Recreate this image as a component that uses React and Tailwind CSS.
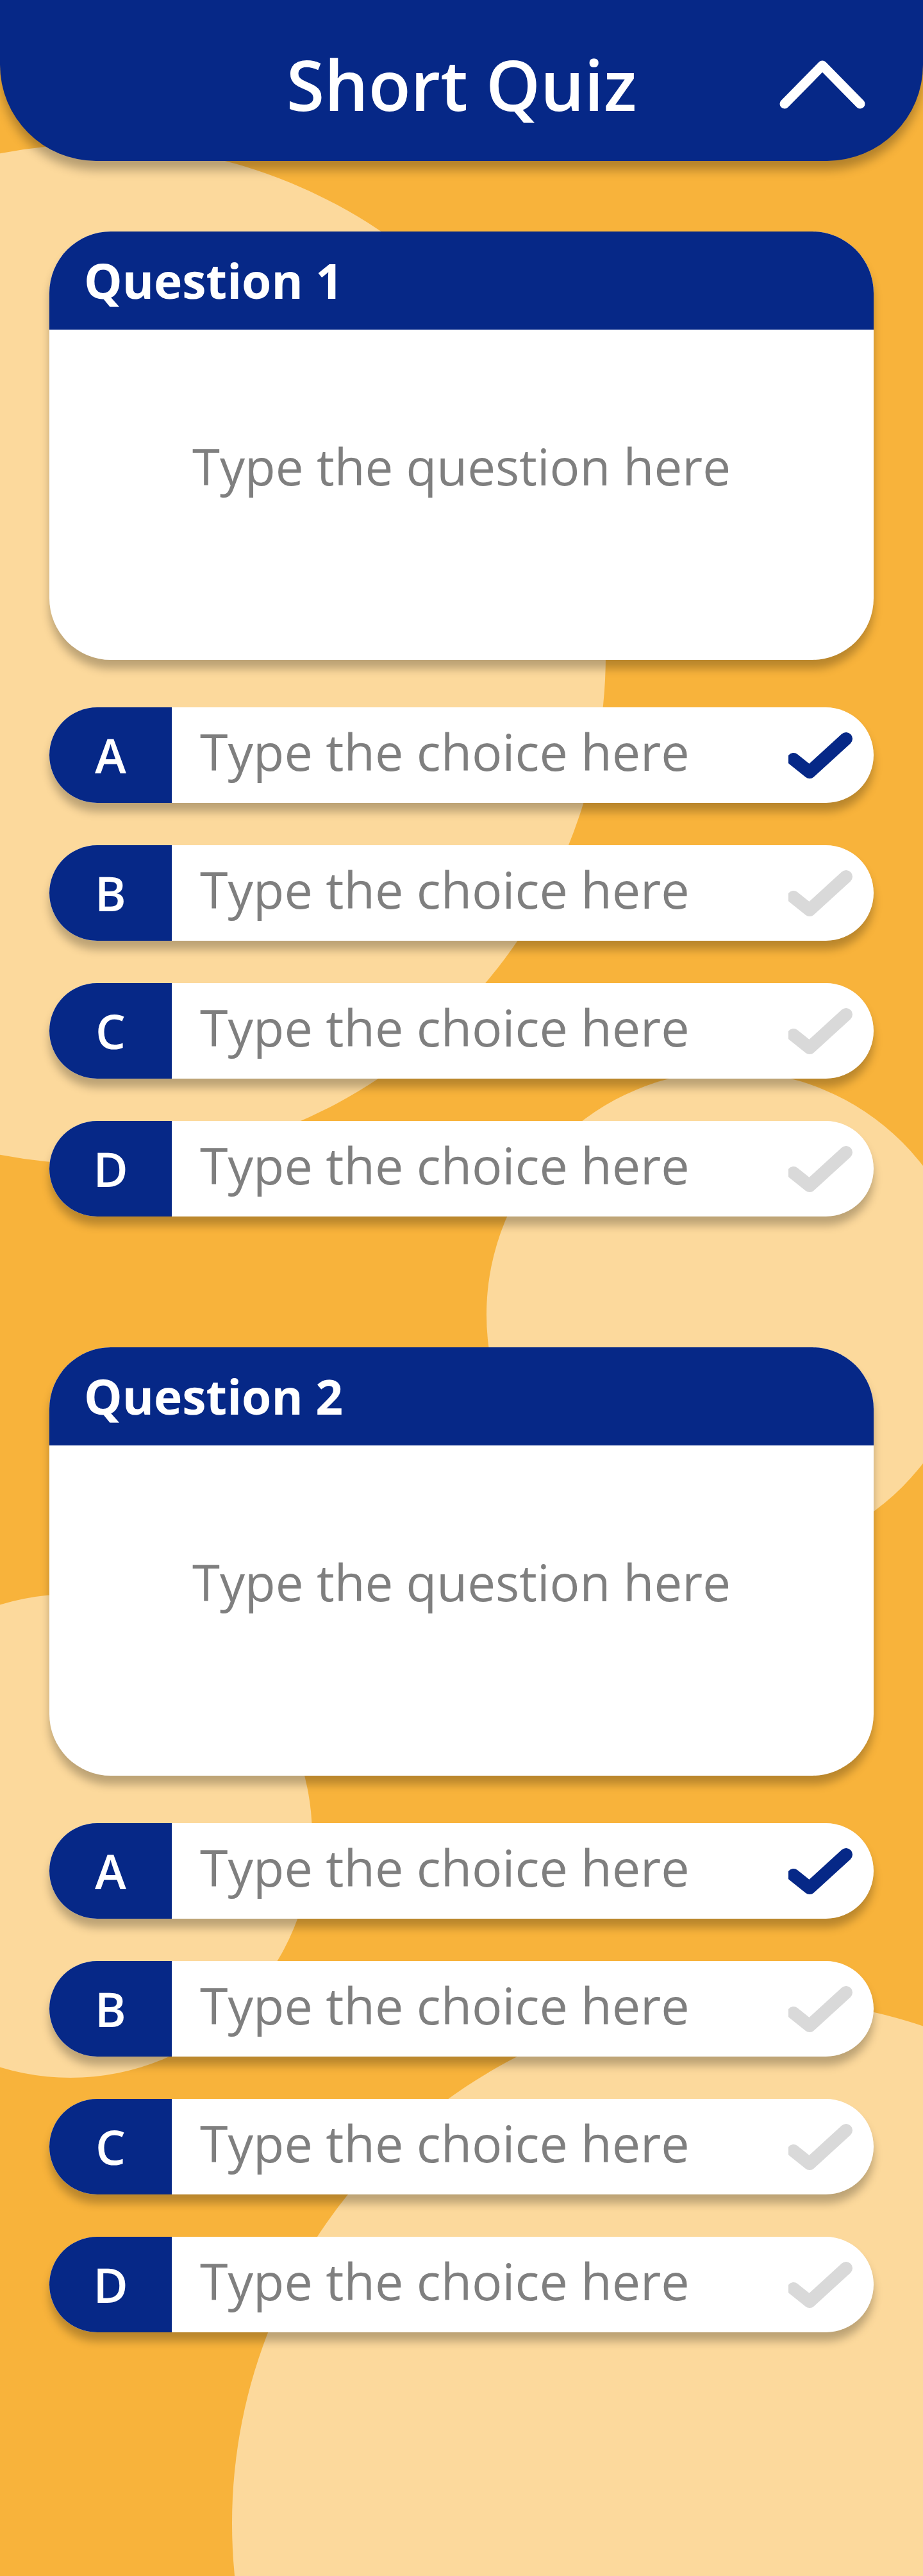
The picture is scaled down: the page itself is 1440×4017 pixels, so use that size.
import React from 'react'

const questions = [
  { title: 'Question 1', choices: ['A', 'B', 'C', 'D'], answer: 'A' },
  { title: 'Question 2', choices: ['A', 'B', 'C', 'D'], answer: 'A' },
]

const Check = ({ active }) => (
  <svg width="100" height="76" viewBox="0 0 100 76" className="mr-[33px] shrink-0">
    <polyline
      points="8,44 33,64 90,12"
      fill="none"
      stroke={active ? '#062887' : '#d9d9d9'}
      strokeWidth="20"
      strokeLinecap="round"
      strokeLinejoin="round"
    />
  </svg>
)

const Choice = ({ letter, active }) => (
  <div className="h-[149px] flex items-center bg-white rounded-full overflow-hidden shadow-[0_14px_14px_rgba(0,0,0,0.25)]">
    <div className="w-[191px] h-full bg-[#062887] flex items-center justify-center text-white text-[74px] font-semibold leading-none">
      {letter}
    </div>
    <div className="flex-1 pl-[44px] pb-[12px] text-[#7f7f7f] text-[79px] leading-none">
      Type the choice here
    </div>
    <Check active={active} />
  </div>
)

const Question = ({ q }) => (
  <section>
    <div className="h-[668px] rounded-[96px] overflow-hidden bg-white shadow-[0_14px_14px_rgba(0,0,0,0.25)] flex flex-col">
      <div className="h-[153px] bg-[#062887] flex items-center pl-[54px] text-white text-[75px] font-bold leading-none">
        {q.title}
      </div>
      <div className="flex-1 flex justify-center pt-[174px] text-[#7f7f7f] text-[78px] leading-none">
        Type the question here
      </div>
    </div>
    <div className="mt-[74px] flex flex-col gap-[66px]">
      {q.choices.map((c) => (
        <Choice key={c} letter={c} active={c === q.answer} />
      ))}
    </div>
  </section>
)

const App = () => {
  return (
    <div className="relative min-h-[4017px] bg-[#f8b33b] overflow-hidden font-['Open_Sans',sans-serif]">
      {/* background blobs */}
      <svg className="absolute inset-0" width="1440" height="4017" viewBox="0 0 1440 4017">
        <circle cx="150" cy="1020" r="795" fill="#fcd99c" />
        <circle cx="1139" cy="2050" r="380" fill="#fcd99c" />
        <circle cx="110" cy="2863" r="377" fill="#fcd99c" />
        <circle cx="1180" cy="3935" r="818" fill="#fcd99c" />
      </svg>

      <header className="relative h-[251px] bg-[#062887] rounded-b-[150px] shadow-[0_14px_16px_rgba(0,0,0,0.28)] grid grid-cols-[1fr_auto_1fr] items-center pt-[12px]">
        <div />
        <h1 className="text-white text-[108px] font-semibold leading-none">Short Quiz</h1>
        <div className="flex justify-end pr-[90px]">
          <svg width="134" height="76" viewBox="0 0 134 76">
            <polyline
              points="8,68 67,8 126,68"
              fill="none"
              stroke="white"
              strokeWidth="15"
              strokeLinecap="round"
              strokeLinejoin="round"
            />
          </svg>
        </div>
      </header>

      <main className="relative px-[77px] pt-[110px] flex flex-col gap-[204px]">
        {questions.map((q) => (
          <Question key={q.title} q={q} />
        ))}
      </main>
    </div>
  )
}

export default App
